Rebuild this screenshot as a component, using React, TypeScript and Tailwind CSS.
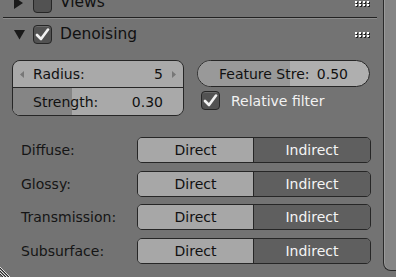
import React from "react";

const font = { fontFamily: '"DejaVu Sans", "Liberation Sans", sans-serif' };

const Dots = () => (
  <div className="grid grid-cols-4 gap-x-[2px] gap-y-[1px]">
    {Array.from({ length: 8 }).map((_, i) => (
      <div key={i} className="w-[2px] h-[2px] bg-white shadow-[1px_1px_0_#222]" />
    ))}
  </div>
);

const Check = ({ on }: { on?: boolean }) => (
  <div className="w-[19px] h-[19px] rounded-[4px] bg-[#525252] border border-[#262626] shadow-[inset_0_1px_0_#6a6a6a] flex items-center justify-center">
    {on && (
      <svg width="15" height="13" viewBox="0 0 15 13">
        <path d="M2 7 L6 11 L13 1.5" fill="none" stroke="#f2f2f2" strokeWidth="2.6" strokeLinecap="round" strokeLinejoin="round" />
      </svg>
    )}
  </div>
);

const Toggle = ({ label }: { label: string }) => (
  <div className="flex items-center h-[26px]">
    <div className="w-[137px] pl-[21px] text-[#151515]">{label}</div>
    <div className="flex flex-1 h-full rounded-[5px] border border-[#262626] overflow-hidden">
      <div className="w-[116px] bg-[#a7a7a7] flex items-center justify-center text-[#111] border-r border-[#262626]">Direct</div>
      <div className="flex-1 bg-[#5f5f5f] flex items-center justify-center text-[#f4f4f4]">Indirect</div>
    </div>
  </div>
);

export default function App() {
  return (
    <div className="w-[396px] h-[277px] bg-[#737373] overflow-hidden relative flex text-[14px] leading-none" style={font}>
      <div className="w-[383px] flex flex-col">
        {/* Views header (cut off) */}
        <div className="flex items-center h-[22px] mt-[-8px] pl-[14px] pr-[14px]">
          <svg width="10" height="12" viewBox="0 0 10 12" className="mr-[9px]">
            <path d="M0 0 L9 6 L0 12 Z" fill="#1a1a1a" />
          </svg>
          <Check />
          <span className="ml-[8px] text-[#111] text-[15.5px]">Views</span>
          <div className="ml-auto"><Dots /></div>
        </div>
        <div className="mt-[3px] ml-[3px] w-[374px] h-[1px] bg-[#222]" />
        <div className="ml-[3px] w-[374px] h-[1px] bg-[#8c8c8c]" />
        {/* Denoising header */}
        <div className="flex items-center h-[21px] mt-[5px] pl-[14px] pr-[14px]">
          <svg width="11" height="10" viewBox="0 0 11 10" className="mr-[8px]">
            <path d="M0 0 L11 0 L5.5 9.5 Z" fill="#1a1a1a" />
          </svg>
          <Check on />
          <span className="ml-[8px] text-[#111] text-[15.5px]">Denoising</span>
          <div className="ml-auto"><Dots /></div>
        </div>
        {/* Sliders */}
        <div className="flex mt-[15px] pl-[12px] gap-[13px]">
          <div className="w-[172px] h-[56px] rounded-[8px] border border-[#262626] overflow-hidden flex flex-col">
            <div className="h-[27px] bg-[#a9a9a9] border-b border-[#262626] flex items-center px-[7px] text-[#111]">
              <svg width="4" height="7" viewBox="0 0 4 7"><path d="M4 0 L0 3.5 L4 7 Z" fill="#777" /></svg>
              <span className="ml-[9px]">Radius:</span>
              <span className="ml-auto mr-[9px]">5</span>
              <svg width="4" height="7" viewBox="0 0 4 7"><path d="M0 0 L4 3.5 L0 7 Z" fill="#777" /></svg>
            </div>
            <div className="flex-1 bg-[#a9a9a9] relative flex items-center text-[#111]">
              <div className="absolute left-0 top-0 bottom-0 w-[59px] bg-[#858585]" />
              <span className="relative ml-[20px]">Strength:</span>
              <span className="relative ml-auto mr-[20px]">0.30</span>
            </div>
          </div>
          <div className="w-[173px] flex flex-col">
            <div className="h-[27px] rounded-full border border-[#262626] overflow-hidden bg-[#afafaf] relative flex items-center text-[#111] whitespace-nowrap">
              <div className="absolute left-0 top-0 bottom-0 w-[92px] bg-[#999999]" />
              <span className="relative ml-[21px]">Feature Stre:</span>
              <span className="relative ml-auto mr-[21px]">0.50</span>
            </div>
            <div className="flex items-center mt-[4px] ml-[4px]">
              <Check on />
              <span className="ml-[11px] text-[#f2f2f2]">Relative filter</span>
            </div>
          </div>
        </div>
        {/* Light paths */}
        <div className="flex flex-col gap-[7.7px] mt-[21px] w-[371px]">
          <Toggle label="Diffuse:" />
          <Toggle label="Glossy:" />
          <Toggle label="Transmission:" />
          <Toggle label="Subsurface:" />
        </div>
      </div>
      {/* right region edge */}
      <div className="w-[13px] h-[271px] border-l border-b border-[#2a2a2a] rounded-bl-[8px] bg-[#858585] shadow-[inset_1px_0_0_#9a9a9a]" />
      {/* resize grip */}
      <svg className="absolute left-0 bottom-0" width="14" height="16" viewBox="0 0 14 16">
        <path d="M0 6 L10 16 M0 9 L7 16 M0 12 L4 16" stroke="#e0e0e0" strokeWidth="1" />
        <path d="M0 7 L9 16 M0 10 L6 16 M0 13 L3 16" stroke="#2a2a2a" strokeWidth="1" />
      </svg>
    </div>
  );
}
